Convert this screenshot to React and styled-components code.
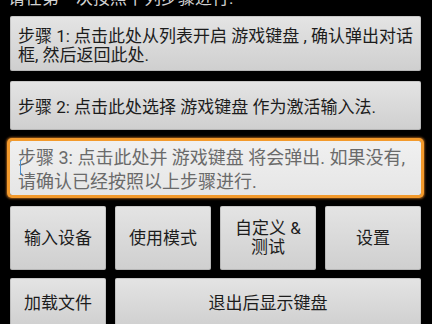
import React from "react";
import styled, { createGlobalStyle } from "styled-components";

const Global = createGlobalStyle`
  html, body { margin: 0; padding: 0; background: #000; height: 324px; overflow: hidden; }
  #root { height: 324px; overflow: hidden; }
  * { box-sizing: border-box; }
`;

const Screen = styled.div`
  height: 324px;
  overflow: hidden;
  background: #000;
  padding: 0 11px 0 10px;
  font-family: "Roboto", "Noto Sans CJK SC", sans-serif;
  display: flex;
  flex-direction: column;
`;

const Header = styled.div`
  margin-top: -11px;
  margin-left: -2px;
  font-size: 17px;
  line-height: 19px;
  color: #d2d2d2;
  white-space: nowrap;
`;

const StepButton = styled.div`
  position: relative;
  margin-top: ${(p) => p.$gap}px;
  height: ${(p) => p.$h}px;
  flex-shrink: 0;
  padding: ${(p) => p.$pt}px 4px 0 8px;
  font-size: ${(p) => (p.$focused ? 18 : 17)}px;
  line-height: ${(p) => (p.$focused ? 24 : 19)}px;
  color: ${(p) => (p.$focused ? "#6a6a6a" : "#1c1c1c")};
  white-space: nowrap;
  border-radius: 2px;
  background: ${(p) =>
    p.$focused
      ? "linear-gradient(to bottom, #f0f0f0, #e6e6e6)"
      : "linear-gradient(to bottom, #e4e4e4, #cfcfcf)"};
  box-shadow: ${(p) =>
    p.$focused
      ? "0 0 0 3px #f39a2c, 0 0 2px 4px rgba(240,140,40,0.55)"
      : "inset 0 0 0 1px rgba(0,0,0,0.12)"};
`;

const Caret = styled.span`
  position: absolute;
  left: 10px;
  top: 19px;
  width: 1px;
  height: 15px;
  background: #4a90d0;
`;

const Grid = styled.div`
  display: grid;
  grid-template-columns: repeat(4, 1fr);
  column-gap: 9px;
  row-gap: 8px;
  margin-top: 11px;
  grid-template-rows: 64px 50px;
`;

const Key = styled.div`
  grid-column: span ${(p) => p.$span || 1};
  display: flex;
  align-items: center;
  justify-content: center;
  text-align: center;
  font-size: 17px;
  line-height: 19px;
  color: #1c1c1c;
  border-radius: 2px;
  background: linear-gradient(to bottom, #e4e4e4, #cfcfcf);
  box-shadow: inset 0 0 0 1px rgba(0,0,0,0.12);
`;

export default function App() {
  return (
    <>
      <Global />
      <Screen>
        <Header>请在第一次按照下列步骤进行.</Header>
        <StepButton $gap={8} $h={55} $pt={11}>
          步骤 1: 点击此处从列表开启 游戏键盘 , 确认弹出对话
          <br />
          框, 然后返回此处.
        </StepButton>
        <StepButton $gap={10} $h={49} $pt={17}>
          步骤 2: 点击此处选择 游戏键盘 作为激活输入法.
        </StepButton>
        <StepButton $gap={11} $h={54} $pt={5} $focused>
          <Caret />
          步骤 3: 点击此处并 游戏键盘 将会弹出. 如果没有,
          <br />
          请确认已经按照以上步骤进行.
        </StepButton>
        <Grid>
          <Key>输入设备</Key>
          <Key>使用模式</Key>
          <Key>
            自定义 &amp;
            <br />
            测试
          </Key>
          <Key>设置</Key>
          <Key>加载文件</Key>
          <Key $span={3}>退出后显示键盘</Key>
        </Grid>
      </Screen>
    </>
  );
}
